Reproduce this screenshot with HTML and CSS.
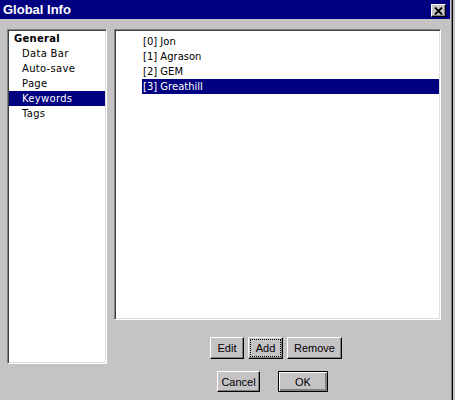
FILE: index.html
```html
<!DOCTYPE html>
<html lang="en">
<head>
    <meta charset="UTF-8">
    <title>Global Info</title>
    <link rel="stylesheet" href="styles.css">
</head>
<body>
    <div class="window">
        <div class="titlebar">
            <span class="title">Global Info</span>
            <button class="close-btn" aria-label="Close">
                <svg width="9" height="8" viewBox="0 0 9 8">
                    <path d="M1 0.5 L8 7.5 M8 0.5 L1 7.5" stroke="#000" stroke-width="1.8"/>
                </svg>
            </button>
        </div>

        <div class="content">
            <ul class="sidebar">
                <li class="group">General</li>
                <li>Data Bar</li>
                <li>Auto-save</li>
                <li>Page</li>
                <li class="selected">Keywords</li>
                <li>Tags</li>
            </ul>

            <div class="main">
                <ul class="keywords">
                    <li>[0] Jon</li>
                    <li>[1] Agrason</li>
                    <li>[2] GEM</li>
                    <li class="selected">[3] Greathill</li>
                </ul>

                <div class="btn-row edit-row">
                    <button class="btn btn-edit">Edit</button>
                    <button class="btn btn-add"><span class="focus">Add</span></button>
                    <button class="btn btn-remove">Remove</button>
                </div>

                <div class="btn-row dialog-row">
                    <button class="btn btn-cancel">Cancel</button>
                    <button class="btn btn-ok">OK</button>
                </div>
            </div>
        </div>
    </div>
</body>
</html>
```

FILE: styles.css
```css
body {
    margin: 0;
    width: 455px;
    height: 400px;
    overflow: hidden;
    background-color: #c6c3c6;
    font-family: "DejaVu Sans", sans-serif;
}
.window {
    box-sizing: border-box;
    width: 453px;
    height: 400px;
    border-right: 1px solid #000;
    box-shadow: inset -1px 0 #808080;
    background-color: #c6c3c6;
}
.titlebar {
    height: 19px;
    margin-right: 2px;
    background-color: #000080;
    display: flex;
    align-items: center;
    justify-content: space-between;
    padding: 0 4px 0 3px;
}
.title {
    color: #fff;
    font-family: "Liberation Sans", Arial, sans-serif;
    font-weight: bold;
    font-size: 13px;
}
.close-btn {
    box-sizing: border-box;
    width: 15px;
    height: 13px;
    padding: 0;
    margin-top: 2px;
    background-color: #c6c3c6;
    border: 1px solid;
    border-color: #fff #000 #000 #fff;
    box-shadow: inset -1px -1px #808080;
    display: flex;
    align-items: center;
    justify-content: center;
}
.content {
    display: flex;
    gap: 7px;
    padding: 10px 0 0 7px;
}
.sidebar, .keywords {
    list-style: none;
    margin: 0;
    box-sizing: border-box;
    background-color: #fff;
    border: 1px solid;
    border-color: #808080 #fff #fff #808080;
    box-shadow: inset 1px 1px #404040, inset -1px -1px #dfdfdf;
    font-size: 10px;
    color: #000;
}
.sidebar {
    width: 100px;
    height: 335px;
    padding: 1px 1px 0 1px;
    letter-spacing: 0.3px;
}
.sidebar li {
    height: 15px;
    line-height: 15px;
    padding-left: 13px;
}
.sidebar li.group {
    padding-left: 5px;
    font-weight: bold;
}
.sidebar li.selected, .keywords li.selected {
    background-color: #000080;
    color: #fff;
}
.main {
    width: 327px;
    display: flex;
    flex-direction: column;
}
.keywords {
    height: 291px;
    padding: 4px 1px 0 27px;
}
.keywords li {
    height: 15px;
    line-height: 15px;
    padding-left: 1px;
}
.btn-row {
    display: flex;
    justify-content: center;
    gap: 4px;
}
.edit-row {
    margin-top: 17px;
    padding-right: 3px;
}
.dialog-row {
    margin-top: 12px;
    gap: 18px;
    padding-right: 10px;
}
.btn {
    box-sizing: border-box;
    height: 22px;
    padding: 0;
    background-color: #c6c3c6;
    font-family: "Liberation Sans", Arial, sans-serif;
    font-size: 11px;
    color: #000;
    border: 1px solid;
    border-color: #fff #000 #000 #fff;
    box-shadow: inset -1px -1px #808080;
}
.btn-edit { width: 34px; }
.btn-add { width: 35px; padding: 2px; }
.btn-remove { width: 55px; }
.btn-cancel { width: 43px; height: 21px; }
.btn-ok {
    width: 50px;
    height: 21px;
    border: 1px solid #000;
    box-shadow: inset 1px 1px #fff, inset -2px -2px #808080;
}
.focus {
    display: flex;
    align-items: center;
    justify-content: center;
    height: 100%;
    outline: 1px dotted #000;
}
```
